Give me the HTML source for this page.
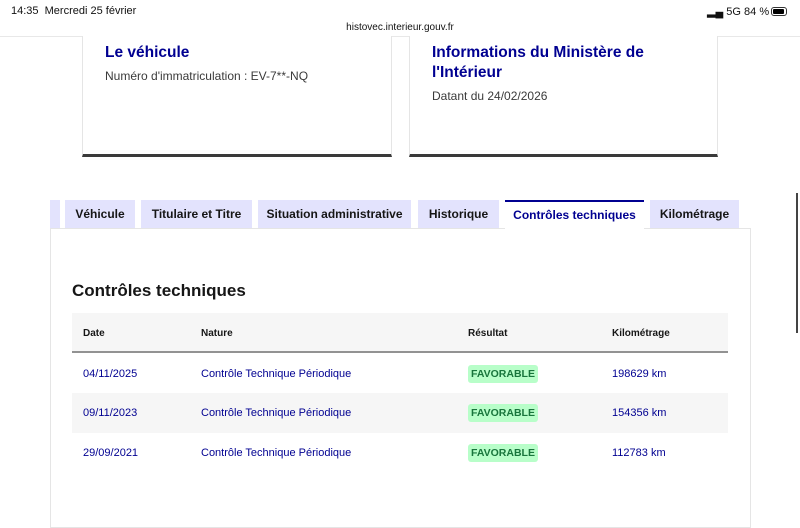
<!DOCTYPE html>
<html><head><meta charset="utf-8"><style>
*{margin:0;padding:0;box-sizing:border-box}
body{width:800px;height:525px;overflow:hidden;background:#fff;font-family:"Liberation Sans",sans-serif;position:relative;color:#161616}
.abs{position:absolute}
.status{font-size:11px;color:#111}
.card{position:absolute;top:36px;height:121px;border:1px solid #e5e5e5;border-top:none;border-bottom:3px solid #3a3a3a;background:#fff}
.card h3{font-size:15.5px;color:#000091;font-weight:bold;line-height:20px}
.card p{font-size:12px;color:#3a3a3a}
.tab{position:absolute;top:200px;height:28px;background:#e3e3fd;font-size:12px;font-weight:bold;color:#161616;text-align:center;line-height:28px}
.tab.act{background:#fff;color:#000091;border-top:2px solid #000091;line-height:26px;height:29px}
.th{position:absolute;font-size:10px;font-weight:bold;top:328px}
.row{position:absolute;left:72px;width:656px;height:40px}
.c{position:absolute;font-size:11px;color:#000091;line-height:40px}
.badge{position:absolute;left:396px;top:11px;width:70px;height:18px;background:#b8fec9;color:#18753c;font-size:10.5px;font-weight:bold;line-height:19px;text-align:center;border-radius:3px}
</style></head><body>
<div class="abs status" style="left:11px;top:5px">14:35&nbsp; Mercredi 25 février</div>
<div class="abs status" style="left:707px;top:5px">▂▄ 5G 84 %</div>
<div class="abs" style="left:771px;top:7px;width:16px;height:9px;border:1px solid #333;border-radius:3px;padding:1px"><div style="width:11px;height:5px;background:#000;border-radius:1px"></div></div>
<div class="abs status" style="left:0;width:800px;text-align:center;top:22px;font-size:10px">histovec.interieur.gouv.fr</div>
<div class="abs" style="left:0;top:36px;width:800px;height:1px;background:#e8e8e8"></div>

<div class="card" style="left:82px;width:310px;padding:7px 22px">
<h3>Le véhicule</h3><p style="margin-top:6px">Numéro d'immatriculation : EV-7**-NQ</p></div>
<div class="card" style="left:409px;width:309px;padding:7px 22px">
<h3>Informations du Ministère de l'Intérieur</h3><p style="margin-top:6px">Datant du 24/02/2026</p></div>

<div class="abs" style="left:796px;top:193px;width:2px;height:140px;background:#444"></div>

<div class="abs" style="left:50px;top:228px;width:701px;height:300px;border:1px solid #e5e5e5"></div>
<div class="tab" style="left:50px;width:10px"></div>
<div class="tab" style="left:65px;width:70px">Véhicule</div>
<div class="tab" style="left:141px;width:111px">Titulaire et Titre</div>
<div class="tab" style="left:258px;width:153px">Situation administrative</div>
<div class="tab" style="left:418px;width:81px">Historique</div>
<div class="tab act" style="left:505px;width:139px">Contrôles techniques</div>
<div class="tab" style="left:650px;width:89px">Kilométrage</div>

<div class="abs" style="left:72px;top:281px;font-size:17px;font-weight:bold">Contrôles techniques</div>
<div class="abs" style="left:72px;top:313px;width:656px;height:40px;background:#f6f6f6;border-bottom:2px solid #929292"></div>
<div class="th" style="left:83px">Date</div>
<div class="th" style="left:201px">Nature</div>
<div class="th" style="left:468px">Résultat</div>
<div class="th" style="left:612px">Kilométrage</div>

<div class="row" style="top:354px"><div class="c" style="left:11px">04/11/2025</div><div class="c" style="left:129px">Contrôle Technique Périodique</div><div class="badge">FAVORABLE</div><div class="c" style="left:540px">198629 km</div></div>
<div class="row" style="top:393px;background:#f6f6f6"><div class="c" style="left:11px">09/11/2023</div><div class="c" style="left:129px">Contrôle Technique Périodique</div><div class="badge">FAVORABLE</div><div class="c" style="left:540px">154356 km</div></div>
<div class="row" style="top:433px"><div class="c" style="left:11px">29/09/2021</div><div class="c" style="left:129px">Contrôle Technique Périodique</div><div class="badge">FAVORABLE</div><div class="c" style="left:540px">112783 km</div></div>
</body></html>
